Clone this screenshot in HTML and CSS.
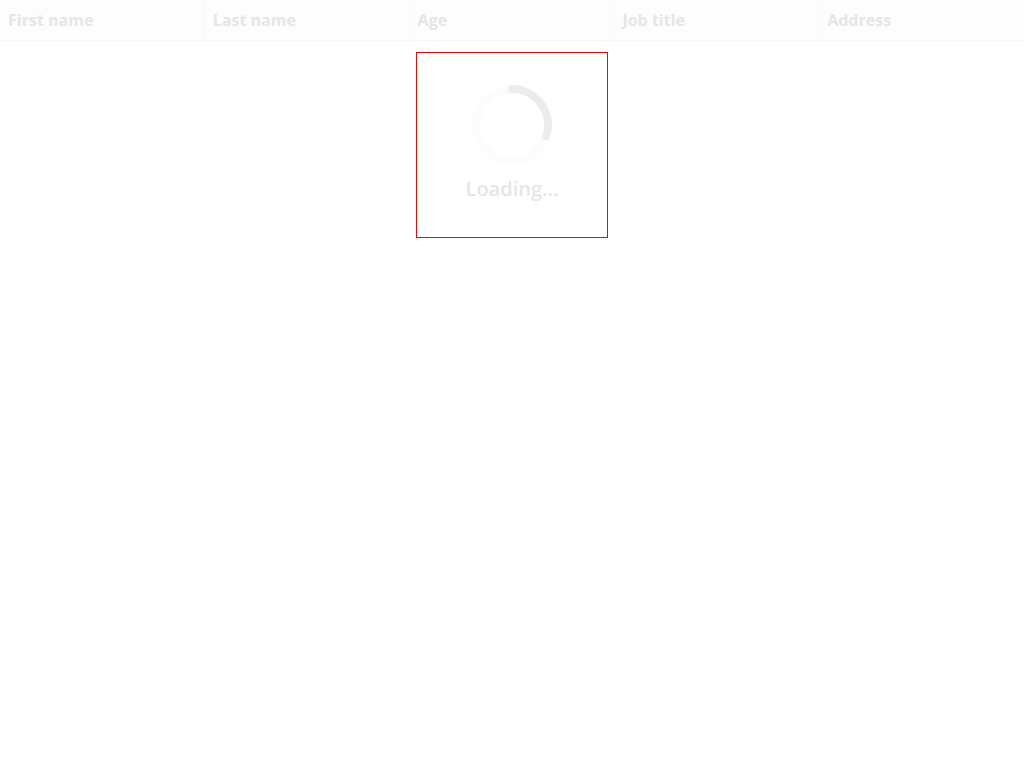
FILE: index.html
```html
<!DOCTYPE html>
<html lang="en">
<head>
<meta charset="utf-8">
<title>Table</title>
<link rel="stylesheet" href="styles.css">
</head>
<body>
<table class="table">
  <thead>
    <tr>
      <th scope="col">First name</th>
      <th scope="col">Last name</th>
      <th scope="col">Age</th>
      <th scope="col">Job title</th>
      <th scope="col">Address</th>
    </tr>
  </thead>
</table>
<div class="loader" role="status">
  <svg class="ring" viewBox="0 0 80 80" aria-hidden="true">
    <circle class="ring-track" cx="40" cy="40" r="36"/>
    <path class="ring-value" d="M40 4A36 36 0 0 1 74.2 51.2"/>
  </svg>
  <span class="loader-label">Loading...</span>
</div>
</body>
</html>
```

FILE: styles.css
```css
body {
  margin: 0;
  background: #fff;
  color: #e6e6e6;
  font-family: "Open Sans", sans-serif;
  font-size: 16px;
}

.table {
  width: 100%;
  table-layout: fixed;
  border-collapse: separate;
  border-spacing: 0;
}

.table th {
  height: 24px;
  padding: 8px;
  background: #fdfdfd;
  border-right: 1px solid #f9f9f9;
  border-bottom: 1px solid #f9f9f9;
  font-weight: 700;
  line-height: 24px;
  text-align: left;
}

.table th:last-child {
  border-right: 0;
}

.loader {
  box-sizing: border-box;
  display: flex;
  flex-direction: column;
  align-items: center;
  gap: 8px;
  width: fit-content;
  min-width: 192px;
  margin: 11px auto 0;
  padding: 32px;
  border: 1px solid #f00;
}

.ring {
  width: 80px;
  height: 80px;
  fill: none;
  stroke-width: 8px;
}

.ring-track {
  stroke: #fcfcfc;
}

.ring-value {
  stroke: #ececec;
  stroke-linecap: round;
}

.loader-label {
  font-size: 20px;
  font-weight: 600;
  line-height: 32px;
}
```
